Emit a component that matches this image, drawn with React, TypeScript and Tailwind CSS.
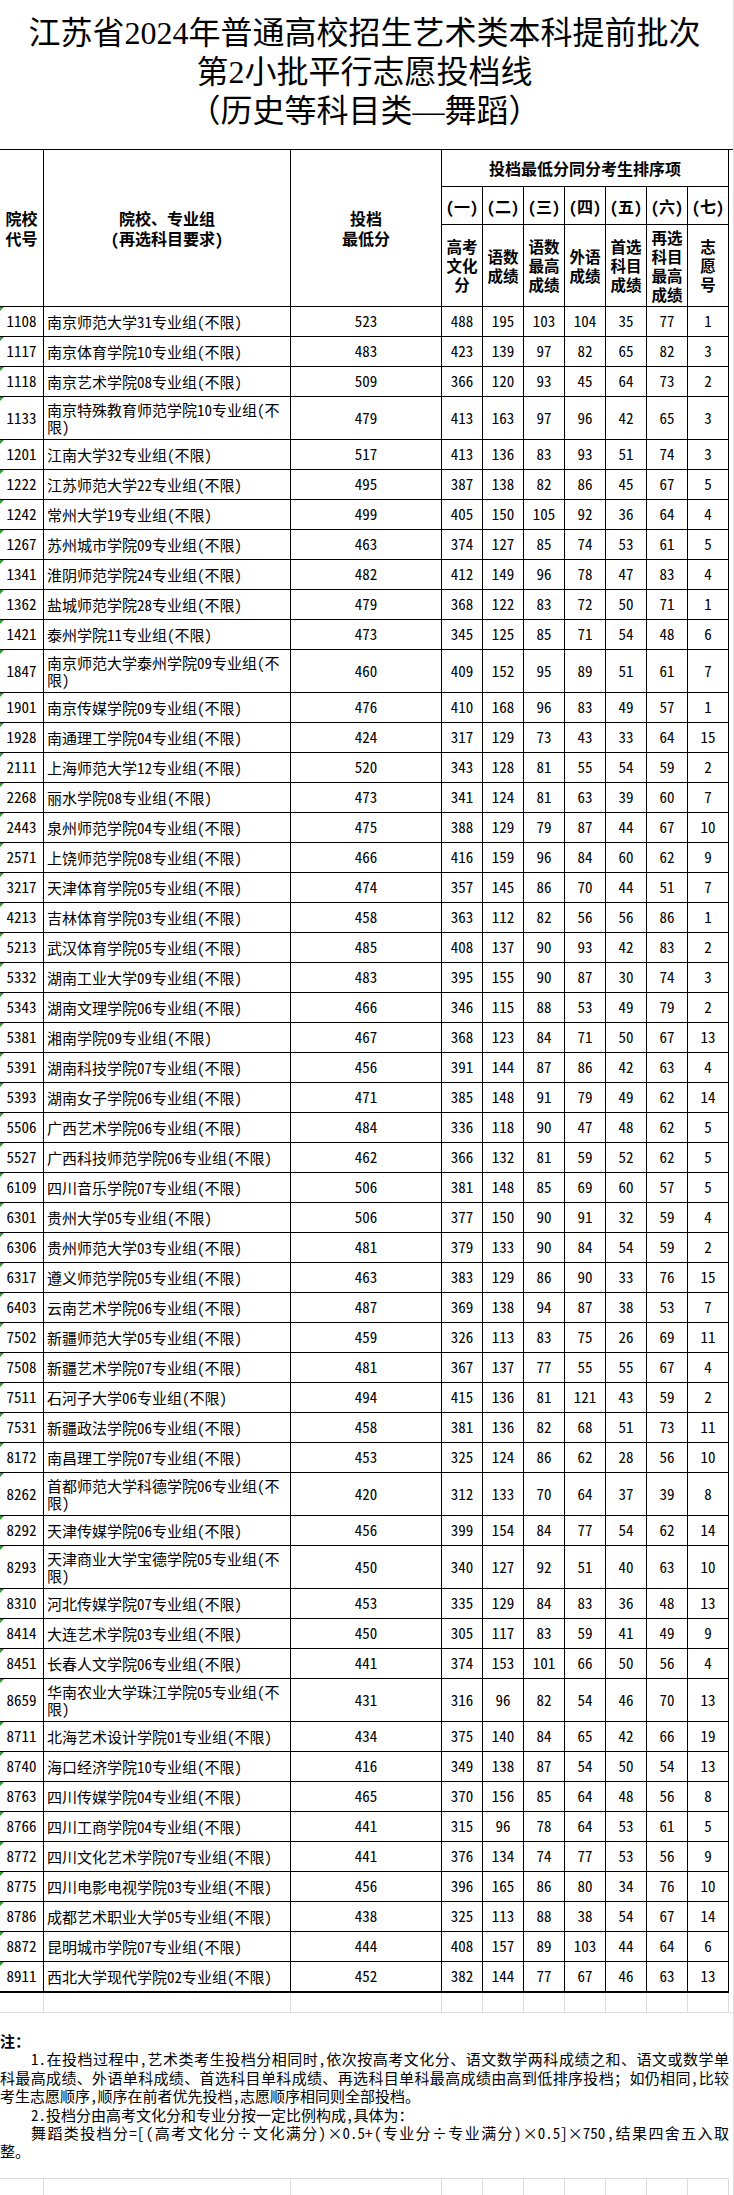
import React from "react";

type Row = [string, string, number, number, number, number, number, number, number, number];

// "|" marks where the name wraps onto a second line
const rows: Row[] = [
  ["1108", "南京师范大学31专业组(不限)", 523, 488, 195, 103, 104, 35, 77, 1],
  ["1117", "南京体育学院10专业组(不限)", 483, 423, 139, 97, 82, 65, 82, 3],
  ["1118", "南京艺术学院08专业组(不限)", 509, 366, 120, 93, 45, 64, 73, 2],
  ["1133", "南京特殊教育师范学院10专业组(不|限)", 479, 413, 163, 97, 96, 42, 65, 3],
  ["1201", "江南大学32专业组(不限)", 517, 413, 136, 83, 93, 51, 74, 3],
  ["1222", "江苏师范大学22专业组(不限)", 495, 387, 138, 82, 86, 45, 67, 5],
  ["1242", "常州大学19专业组(不限)", 499, 405, 150, 105, 92, 36, 64, 4],
  ["1267", "苏州城市学院09专业组(不限)", 463, 374, 127, 85, 74, 53, 61, 5],
  ["1341", "淮阴师范学院24专业组(不限)", 482, 412, 149, 96, 78, 47, 83, 4],
  ["1362", "盐城师范学院28专业组(不限)", 479, 368, 122, 83, 72, 50, 71, 1],
  ["1421", "泰州学院11专业组(不限)", 473, 345, 125, 85, 71, 54, 48, 6],
  ["1847", "南京师范大学泰州学院09专业组(不|限)", 460, 409, 152, 95, 89, 51, 61, 7],
  ["1901", "南京传媒学院09专业组(不限)", 476, 410, 168, 96, 83, 49, 57, 1],
  ["1928", "南通理工学院04专业组(不限)", 424, 317, 129, 73, 43, 33, 64, 15],
  ["2111", "上海师范大学12专业组(不限)", 520, 343, 128, 81, 55, 54, 59, 2],
  ["2268", "丽水学院08专业组(不限)", 473, 341, 124, 81, 63, 39, 60, 7],
  ["2443", "泉州师范学院04专业组(不限)", 475, 388, 129, 79, 87, 44, 67, 10],
  ["2571", "上饶师范学院08专业组(不限)", 466, 416, 159, 96, 84, 60, 62, 9],
  ["3217", "天津体育学院05专业组(不限)", 474, 357, 145, 86, 70, 44, 51, 7],
  ["4213", "吉林体育学院03专业组(不限)", 458, 363, 112, 82, 56, 56, 86, 1],
  ["5213", "武汉体育学院05专业组(不限)", 485, 408, 137, 90, 93, 42, 83, 2],
  ["5332", "湖南工业大学09专业组(不限)", 483, 395, 155, 90, 87, 30, 74, 3],
  ["5343", "湖南文理学院06专业组(不限)", 466, 346, 115, 88, 53, 49, 79, 2],
  ["5381", "湘南学院09专业组(不限)", 467, 368, 123, 84, 71, 50, 67, 13],
  ["5391", "湖南科技学院07专业组(不限)", 456, 391, 144, 87, 86, 42, 63, 4],
  ["5393", "湖南女子学院06专业组(不限)", 471, 385, 148, 91, 79, 49, 62, 14],
  ["5506", "广西艺术学院06专业组(不限)", 484, 336, 118, 90, 47, 48, 62, 5],
  ["5527", "广西科技师范学院06专业组(不限)", 462, 366, 132, 81, 59, 52, 62, 5],
  ["6109", "四川音乐学院07专业组(不限)", 506, 381, 148, 85, 69, 60, 57, 5],
  ["6301", "贵州大学05专业组(不限)", 506, 377, 150, 90, 91, 32, 59, 4],
  ["6306", "贵州师范大学03专业组(不限)", 481, 379, 133, 90, 84, 54, 59, 2],
  ["6317", "遵义师范学院05专业组(不限)", 463, 383, 129, 86, 90, 33, 76, 15],
  ["6403", "云南艺术学院06专业组(不限)", 487, 369, 138, 94, 87, 38, 53, 7],
  ["7502", "新疆师范大学05专业组(不限)", 459, 326, 113, 83, 75, 26, 69, 11],
  ["7508", "新疆艺术学院07专业组(不限)", 481, 367, 137, 77, 55, 55, 67, 4],
  ["7511", "石河子大学06专业组(不限)", 494, 415, 136, 81, 121, 43, 59, 2],
  ["7531", "新疆政法学院06专业组(不限)", 458, 381, 136, 82, 68, 51, 73, 11],
  ["8172", "南昌理工学院07专业组(不限)", 453, 325, 124, 86, 62, 28, 56, 10],
  ["8262", "首都师范大学科德学院06专业组(不|限)", 420, 312, 133, 70, 64, 37, 39, 8],
  ["8292", "天津传媒学院06专业组(不限)", 456, 399, 154, 84, 77, 54, 62, 14],
  ["8293", "天津商业大学宝德学院05专业组(不|限)", 450, 340, 127, 92, 51, 40, 63, 10],
  ["8310", "河北传媒学院07专业组(不限)", 453, 335, 129, 84, 83, 36, 48, 13],
  ["8414", "大连艺术学院03专业组(不限)", 450, 305, 117, 83, 59, 41, 49, 9],
  ["8451", "长春人文学院06专业组(不限)", 441, 374, 153, 101, 66, 50, 56, 4],
  ["8659", "华南农业大学珠江学院05专业组(不|限)", 431, 316, 96, 82, 54, 46, 70, 13],
  ["8711", "北海艺术设计学院01专业组(不限)", 434, 375, 140, 84, 65, 42, 66, 19],
  ["8740", "海口经济学院10专业组(不限)", 416, 349, 138, 87, 54, 50, 54, 13],
  ["8763", "四川传媒学院04专业组(不限)", 465, 370, 156, 85, 64, 48, 56, 8],
  ["8766", "四川工商学院04专业组(不限)", 441, 315, 96, 78, 64, 53, 61, 5],
  ["8772", "四川文化艺术学院07专业组(不限)", 441, 376, 134, 74, 77, 53, 56, 9],
  ["8775", "四川电影电视学院03专业组(不限)", 456, 396, 165, 86, 80, 34, 76, 10],
  ["8786", "成都艺术职业大学05专业组(不限)", 438, 325, 113, 88, 38, 54, 67, 14],
  ["8872", "昆明城市学院07专业组(不限)", 444, 408, 157, 89, 103, 44, 64, 6],
  ["8911", "西北大学现代学院02专业组(不限)", 452, 382, 144, 77, 67, 46, 63, 13],
];

const cols = "grid grid-cols-[44px_247px_151px_41px_41px_41px_41px_41px_41px_41px]";
const cell = "border-r border-b border-black flex items-center justify-center";

const subHeads = [
  ["高考", "文化", "分"],
  ["语数", "成绩"],
  ["语数", "最高", "成绩"],
  ["外语", "成绩"],
  ["首选", "科目", "成绩"],
  ["再选", "科目", "最高", "成绩"],
  ["志", "愿", "号"],
];

const GridLines = ({ h }: { h: string }) => (
  <div className={`${cols} ${h}`}>
    {Array.from({ length: 10 }).map((_, i) => (
      <div key={i} className="border-r border-[#dcdcdc]" />
    ))}
  </div>
);

export default function App() {
  return (
    <div className="w-[734px] h-[2195px] bg-white text-black border-r border-[#dcdcdc] font-['Noto_Sans_CJK_SC',sans-serif] [font-feature-settings:'hwid'] overflow-hidden">
      <div className="w-[729px] h-[149px] pt-[14px] text-center text-[32px] leading-[39px] font-['Liberation_Serif','Noto_Sans_CJK_SC',serif] [font-feature-settings:normal]">
        <div>江苏省2024年普通高校招生艺术类本科提前批次</div>
        <div>第2小批平行志愿投档线</div>
        <div>（历史等科目类—舞蹈）</div>
      </div>

      {/* header */}
      <div className={`${cols} grid-rows-[37px_38px_82px] border-t border-black font-bold text-[16px] leading-[20px]`}>
        <div className={`${cell} row-span-3 flex-col`}>
          <span>院校</span>
          <span>代号</span>
        </div>
        <div className={`${cell} row-span-3 flex-col`}>
          <span>院校、专业组</span>
          <span>（再选科目要求）</span>
        </div>
        <div className={`${cell} row-span-3 flex-col`}>
          <span>投档</span>
          <span>最低分</span>
        </div>
        <div className={`${cell} col-span-7 text-[16px]`}>投档最低分同分考生排序项</div>
        {["一", "二", "三", "四", "五", "六", "七"].map((n) => (
          <div key={n} className={`${cell} whitespace-nowrap`}>
            ({n})
          </div>
        ))}
        {subHeads.map((lines, i) => (
          <div key={i} className={`${cell} flex-col text-[15.5px] leading-[19px]`}>
            {lines.map((l) => (
              <span key={l}>{l}</span>
            ))}
          </div>
        ))}
      </div>

      {/* body */}
      <div className={`${cols} text-[15px]`}>
        {rows.map((r, idx) => {
          const [code, name, ...nums] = r;
          const parts = name.split("|");
          const last = idx === rows.length - 1;
          const h = parts.length > 1 ? "h-[43px]" : last ? "h-[31px]" : "h-[30px]";
          const b = last ? "border-b-2" : "";
          return (
            <React.Fragment key={code}>
              <div className={`${cell} ${h} ${b} relative`}>
                <span className="absolute left-0 top-0 w-0 h-0 border-t-[4px] border-r-[4px] border-t-[#2f9a2f] border-r-transparent" />
                {code}
              </div>
              <div className={`${cell} ${h} ${b} flex-col !items-start pl-[3px] leading-[17px] whitespace-nowrap`}>
                {parts.map((p) => (
                  <span key={p}>{p}</span>
                ))}
              </div>
              {nums.map((n, j) => (
                <div key={j} className={`${cell} ${h} ${b}`}>
                  {n}
                </div>
              ))}
            </React.Fragment>
          );
        })}
      </div>

      <div className="border-b border-[#dcdcdc]">
        <GridLines h="h-[19px]" />
      </div>

      {/* notes */}
      <div className="w-[729px] h-[166px] border-b border-[#dcdcdc] pt-[19px] text-[15px] leading-[18.4px]">
        <div className="font-bold">注：</div>
        <div className="pl-[31px] whitespace-nowrap text-justify [text-align-last:justify]">
          1.在投档过程中，艺术类考生投档分相同时，依次按高考文化分、语文数学两科成绩之和、语文或数学单
        </div>
        <div className="whitespace-nowrap text-justify [text-align-last:justify]">
          科最高成绩、外语单科成绩、首选科目单科成绩、再选科目单科最高成绩由高到低排序投档；如仍相同，比较
        </div>
        <div className="whitespace-nowrap">考生志愿顺序，顺序在前者优先投档，志愿顺序相同则全部投档。</div>
        <div className="pl-[31px] whitespace-nowrap">2.投档分由高考文化分和专业分按一定比例构成，具体为：</div>
        <div className="pl-[31px] whitespace-nowrap text-justify [text-align-last:justify]">
          舞蹈类投档分=[（高考文化分÷文化满分）×0.5+（专业分÷专业满分）×0.5]×750，结果四舍五入取
        </div>
        <div>整。</div>
      </div>

      <GridLines h="h-[16px]" />
    </div>
  );
}
